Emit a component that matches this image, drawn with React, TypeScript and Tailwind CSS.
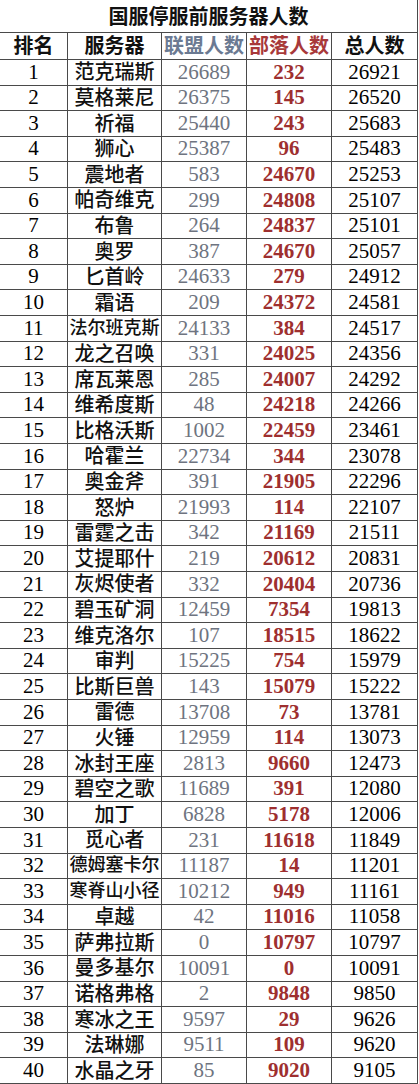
const ROWS: [string, number, number, number][] = [
  ['范克瑞斯', 26689, 232, 26921],
  ['莫格莱尼', 26375, 145, 26520],
  ['祈福', 25440, 243, 25683],
  ['狮心', 25387, 96, 25483],
  ['震地者', 583, 24670, 25253],
  ['帕奇维克', 299, 24808, 25107],
  ['布鲁', 264, 24837, 25101],
  ['奥罗', 387, 24670, 25057],
  ['匕首岭', 24633, 279, 24912],
  ['霜语', 209, 24372, 24581],
  ['法尔班克斯', 24133, 384, 24517],
  ['龙之召唤', 331, 24025, 24356],
  ['席瓦莱恩', 285, 24007, 24292],
  ['维希度斯', 48, 24218, 24266],
  ['比格沃斯', 1002, 22459, 23461],
  ['哈霍兰', 22734, 344, 23078],
  ['奥金斧', 391, 21905, 22296],
  ['怒炉', 21993, 114, 22107],
  ['雷霆之击', 342, 21169, 21511],
  ['艾提耶什', 219, 20612, 20831],
  ['灰烬使者', 332, 20404, 20736],
  ['碧玉矿洞', 12459, 7354, 19813],
  ['维克洛尔', 107, 18515, 18622],
  ['审判', 15225, 754, 15979],
  ['比斯巨兽', 143, 15079, 15222],
  ['雷德', 13708, 73, 13781],
  ['火锤', 12959, 114, 13073],
  ['冰封王座', 2813, 9660, 12473],
  ['碧空之歌', 11689, 391, 12080],
  ['加丁', 6828, 5178, 12006],
  ['觅心者', 231, 11618, 11849],
  ['德姆塞卡尔', 11187, 14, 11201],
  ['寒脊山小径', 10212, 949, 11161],
  ['卓越', 42, 11016, 11058],
  ['萨弗拉斯', 0, 10797, 10797],
  ['曼多基尔', 10091, 0, 10091],
  ['诺格弗格', 2, 9848, 9850],
  ['寒冰之王', 9597, 29, 9626],
  ['法琳娜', 9511, 109, 9620],
  ['水晶之牙', 85, 9020, 9105],
];

const FONT = "font-['Liberation_Serif','Noto_Sans_CJK_SC',serif]";

function Cell({ children, className = '' }: { children: React.ReactNode; className?: string }) {
  return (
    <div
      className={`flex items-center justify-center overflow-hidden whitespace-nowrap border-r border-b border-[#4a4a4a] ${className}`}
    >
      {children}
    </div>
  );
}

export default function App() {
  return (
    <div className={`w-[419px] h-[1084px] bg-white text-[#111] ${FONT}`}>
      <div className="grid h-full w-[418px] grid-cols-[68px_94px_85px_85px_86px] grid-rows-[33px_27px_repeat(40,minmax(0,1fr))]">
        {/* Title */}
        <div className="col-span-5 flex items-center justify-center border-r border-b border-[#4a4a4a] text-[20px] font-bold pt-[2px]">
          国服停服前服务器人数
        </div>

        {/* Header */}
        <Cell className="text-[20px] font-bold">排名</Cell>
        <Cell className="text-[20px] font-bold">服务器</Cell>
        <Cell className="text-[20px] font-bold text-[#6b7a92]">联盟人数</Cell>
        <Cell className="text-[20px] font-bold text-[#a8393a]">部落人数</Cell>
        <Cell className="text-[20px] font-bold">总人数</Cell>

        {/* Rows */}
        {ROWS.map(([name, alliance, horde, total], i) => (
          <div key={name} className="contents">
            <Cell className="text-[21px] text-black">{i + 1}</Cell>
            <Cell className={`font-medium ${name.length > 4 ? 'text-[18px]' : 'text-[20px]'}`}>{name}</Cell>
            <Cell className="text-[21px] text-[#6e7480]">{alliance}</Cell>
            <Cell className="text-[21px] font-bold text-[#9e2f2f]">{horde}</Cell>
            <Cell className="text-[21px] text-black">{total}</Cell>
          </div>
        ))}
      </div>
    </div>
  );
}
